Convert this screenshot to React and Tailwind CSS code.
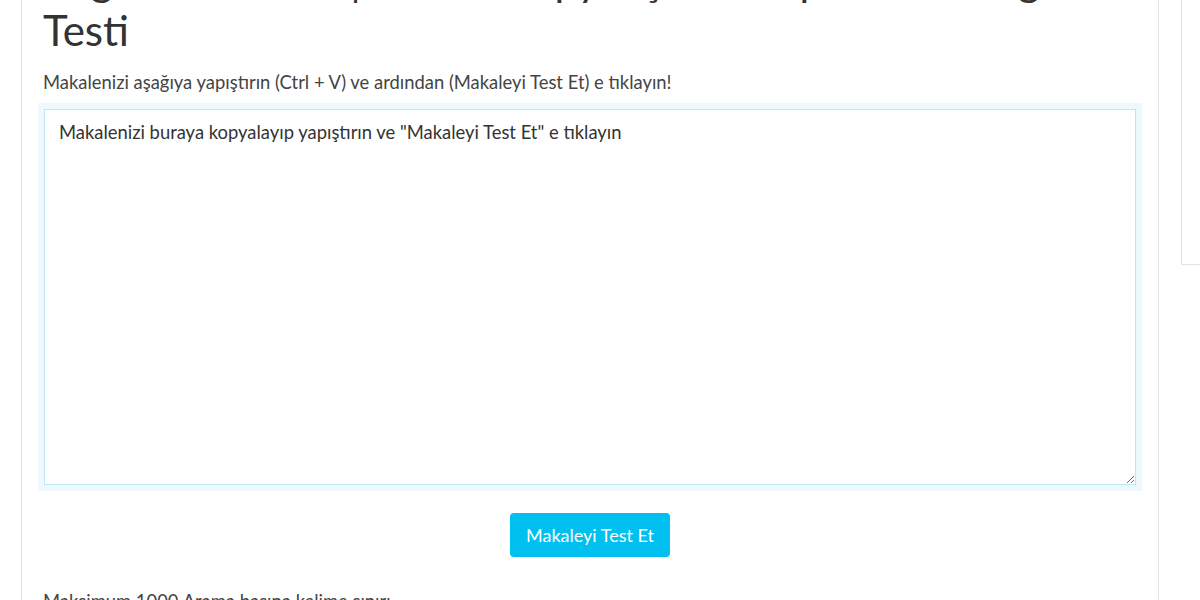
export default function App() {
  return (
    <div className="bg-white overflow-hidden h-[600px]" style={{ fontFamily: 'Lato, "Liberation Sans", sans-serif' }}>
      <div className="flex gap-[22px] pl-[21px]">
        <main className="w-[1138px] shrink-0 border-x border-[#e3e3e3] px-[21px] -mt-[45px] pb-10">
          <h1 className="text-[42px] leading-[50px] text-[#333] font-normal">
            <span className="whitespace-nowrap">Bağlantı Kontrol | Online Kopya İçerik Tespit Aracı Doğruluk</span>
            <br />
            Testi
          </h1>
          <p className="mt-[15px] text-[18.4px] leading-6 text-[#444]">
            Makalenizi aşağıya yapıştırın (Ctrl + V) ve ardından (Makaleyi Test Et) e tıklayın!
          </p>
          <div className="mt-[9px] -mx-[5px] p-[6px] bg-[#eef9fd]">
            <textarea
              className="block w-full h-[376px] border border-[#bfe6f4] bg-white px-[14px] py-[10px] text-[18.4px] leading-6 text-[#333] placeholder:text-[#333] outline-none"
              placeholder={'Makalenizi buraya kopyalayıp yapıştırın ve "Makaleyi Test Et" e tıklayın'}
            />
          </div>
          <div className="flex justify-center mt-[22px]">
            <button className="h-[44px] px-[16px] rounded-[4px] bg-[#00c0ef] text-white text-[18px]">
              Makaleyi Test Et
            </button>
          </div>
          <p className="mt-[32px] text-[18.4px] leading-6 text-[#444]">Maksimum 1000 Arama başına kelime sınırı</p>
        </main>
        <aside className="flex-1 h-[265px] border-l border-b border-[#e3e3e3]"></aside>
      </div>
    </div>
  );
}
